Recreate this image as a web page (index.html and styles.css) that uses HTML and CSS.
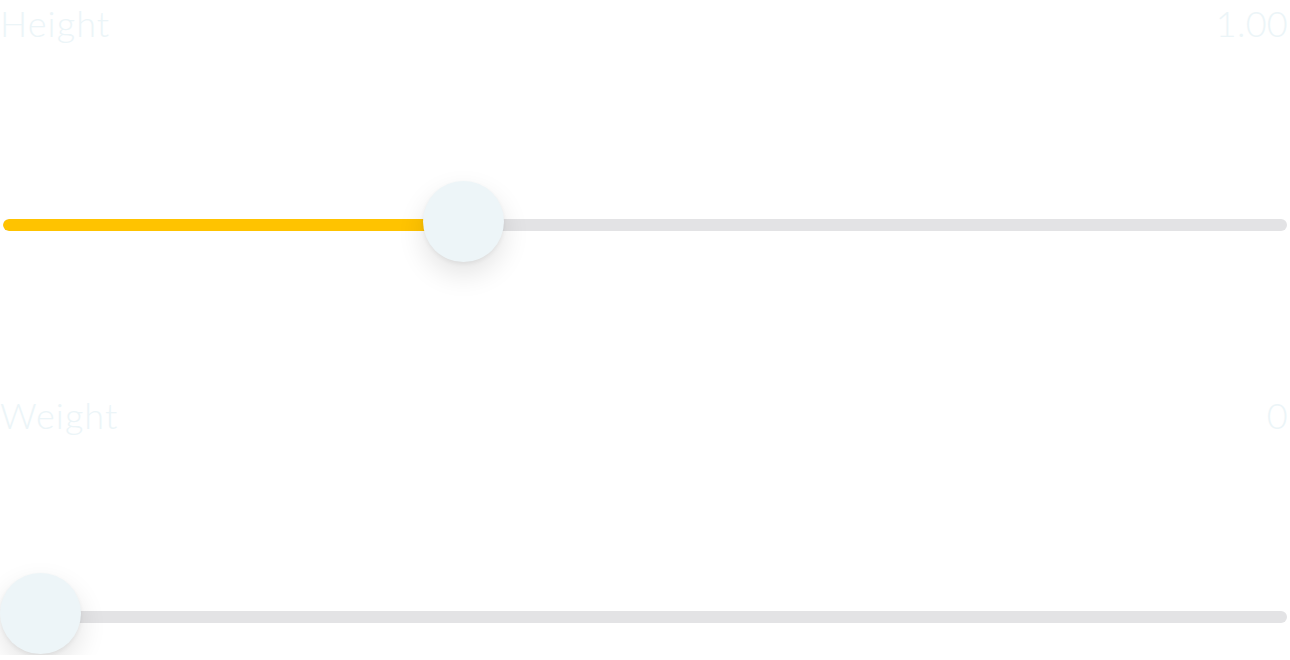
FILE: index.html
```html
<!DOCTYPE html>
<html lang="en">
<head>
    <meta charset="UTF-8">
    <meta name="viewport" content="width=device-width, initial-scale=1.0">
    <title>Sliders</title>
    <link rel="stylesheet" href="styles.css">
</head>
<body>
<div class="painel">
    <div class="campo">
        <div class="cabecalho">
            <span class="rotulo">Height</span>
            <span class="valor">1.00</span>
        </div>
        <div class="slider">
            <div class="trilho">
                <div class="preenchido" style="width: 460px"></div>
            </div>
            <div class="botao" style="left: 423px"></div>
        </div>
    </div>

    <div class="campo">
        <div class="cabecalho">
            <span class="rotulo">Weight</span>
            <span class="valor">0</span>
        </div>
        <div class="slider">
            <div class="trilho">
                <div class="preenchido" style="width: 0px"></div>
            </div>
            <div class="botao" style="left: 0px"></div>
        </div>
    </div>
</div>
</body>
</html>
```

FILE: styles.css
```css
body {
    margin: 0;
    background-color: #ffffff;
    font-family: Lato, "Open Sans", sans-serif;
    overflow: hidden;
}

.painel {
    display: flex;
    flex-direction: column;
}

/* cada bloco: titulo + slider */
.campo {
    height: 392px;
}

.campo:last-child {
    height: auto;
}

.cabecalho {
    display: flex;
    justify-content: space-between;
    height: 48px;
    line-height: 46px;
    font-size: 36px;
    font-weight: 300;
    color: #ecf5f8;
    padding-right: 2px;
}

.rotulo {
    letter-spacing: 1.1px;
}

.valor {
    letter-spacing: 0.3px;
}

.slider {
    position: relative;
    height: 81px;
    margin-top: 134px;
}

.trilho {
    position: relative;
    top: 37px;
    margin: 0 3px;
    height: 12px;
    border-radius: 6px;
    background-color: #e3e3e5;
    overflow: hidden;
}

.preenchido {
    height: 100%;
    background-color: #ffc300;
    border-radius: 6px 0 0 6px;
}

/* botao redondo do slider */
.botao {
    position: absolute;
    top: -1px;
    width: 81px;
    height: 81px;
    border-radius: 50%;
    background-color: #edf5f8;
    box-shadow: 0 12px 28px rgba(0, 0, 0, 0.11), 0 2px 4px rgba(0, 0, 0, 0.06);
}
```
